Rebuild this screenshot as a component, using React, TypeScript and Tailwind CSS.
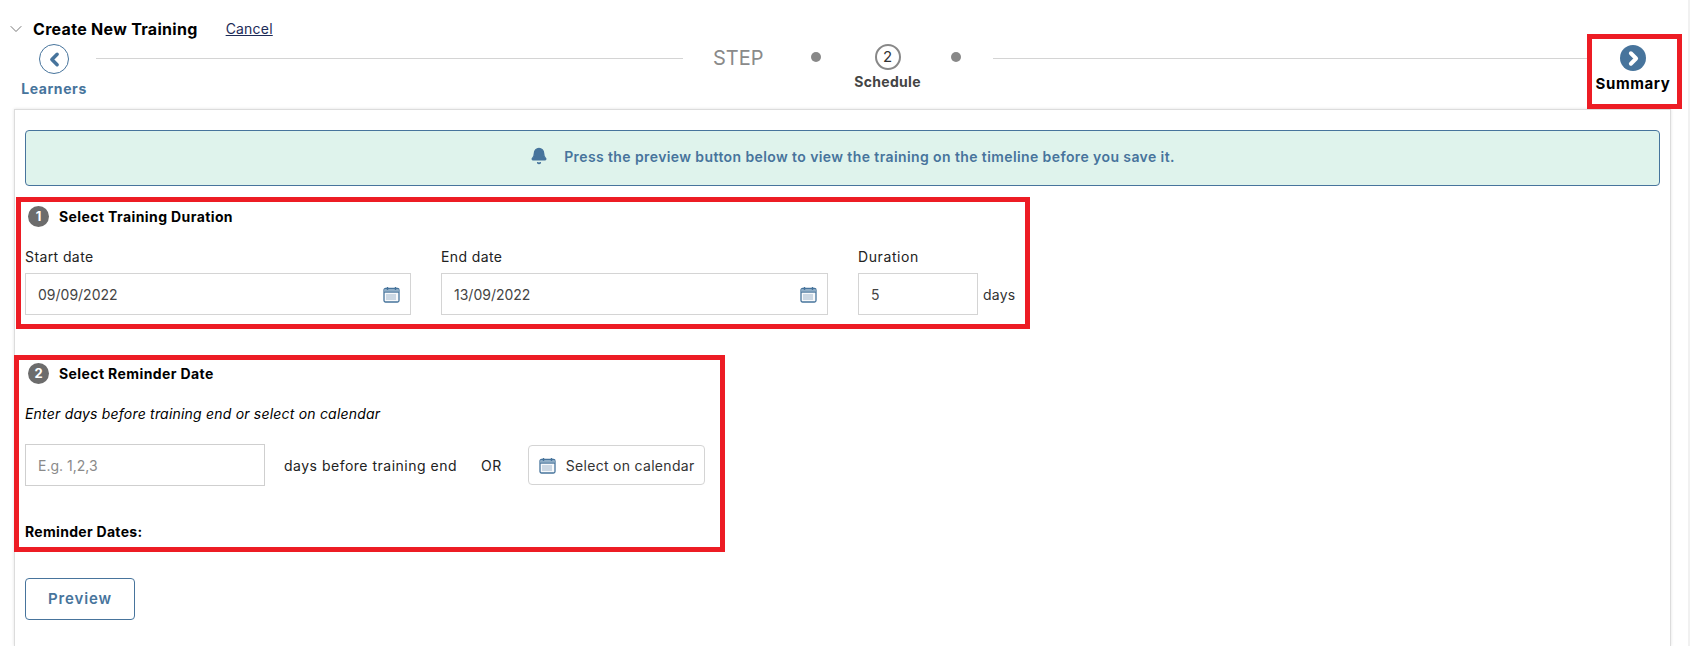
import React from "react";
import { Bell, ChevronDown, ChevronLeft, ChevronRight } from "lucide-react";

const CalendarIcon: React.FC = () => (
  <svg width="17" height="17" viewBox="0 0 17 17" fill="none" className="shrink-0">
    <rect x="1" y="2.5" width="15" height="13.5" rx="1.5" stroke="#47749c" strokeWidth="1.3" fill="#f7f9fb" />
    <rect x="1.5" y="3" width="14" height="3" fill="#8fadc6" />
    <path d="M1 6.2h15" stroke="#47749c" strokeWidth="1" />
    <path d="M4.5 1v3M12.5 1v3" stroke="#47749c" strokeWidth="1.4" />
    <path d="M3.5 9h10M3.5 11h10M3.5 13h10" stroke="#47749c" strokeWidth="1" strokeDasharray="1 1" />
  </svg>
);

const NumberBadge: React.FC<{ n: number }> = ({ n }) => (
  <span className="w-[21px] h-[21px] rounded-full bg-[#6c6c6c] text-white text-[13px] font-bold flex items-center justify-center">
    {n}
  </span>
);

const DateField: React.FC<{ label: string; value: string }> = ({ label, value }) => (
  <div>
    <div className="text-[14px] leading-[20px] tracking-[0.4px] text-[#222] mb-[6px]">{label}</div>
    <div className="w-full h-[42px] border border-[#d4d4d4] pl-3 pr-[10px] flex items-center justify-between text-[14px] text-[#444]">
      <span>{value}</span>
      <CalendarIcon />
    </div>
  </div>
);

export default function App() {
  return (
    <div className="h-[646px] overflow-hidden bg-white font-['Inter','Liberation_Sans',sans-serif] pt-[17px] border-r-[2px] border-[#f1f1f1]">
      {/* title row */}
      <div className="flex items-center h-[24px] pl-[6px]">
        <ChevronDown size={20} color="#777" strokeWidth={1.2} />
        <span className="ml-[7px] text-[16px] tracking-[0.3px] font-bold text-black">Create New Training</span>
        <a href="#" className="ml-[28px] -mt-[2px] text-[14px] tracking-[0.2px] underline text-[#1d2b57]">
          Cancel
        </a>
      </div>

      {/* stepper */}
      <div className="flex h-[68px] pl-[21px] pr-[6px]">
        <div className="w-[66px] flex flex-col items-center pt-[3px]">
          <span className="w-[30px] h-[30px] rounded-full border border-[#47749c] flex items-center justify-center">
            <ChevronLeft size={21} color="#47749c" strokeWidth={4} />
          </span>
          <span className="mt-[4px] text-[14px] tracking-[0.6px] font-bold text-[#47749c]">Learners</span>
        </div>
        <div className="w-[587px] ml-[9px] mt-[17px] h-px bg-[#d4d4d4]" />
        <div className="ml-[30px] mt-[4px] h-[26px] flex items-center text-[20px] text-[#8a8a8a]">STEP</div>
        <div className="ml-[47px] mt-[11px] w-[10px] h-[10px] rounded-full bg-[#888]" />
        <div className="w-[130px] pl-[4px] flex flex-col items-center pt-[3px]">
          <span className="w-[26px] h-[26px] rounded-full border-2 border-[#888] flex items-center justify-center text-[15px] text-[#333]">
            2
          </span>
          <span className="mt-[1px] text-[14px] tracking-[0.3px] font-bold text-[#444]">Schedule</span>
        </div>
        <div className="mt-[11px] w-[10px] h-[10px] rounded-full bg-[#888]" />
        <div className="flex-1 ml-[32px] mt-[17px] h-px bg-[#d4d4d4]" />
        <div className="w-[95px] h-[75px] -mt-[7px] border-[5px] border-[#ed1c24] flex flex-col items-center pt-[6px] pr-[3px] bg-white">
          <span className="w-[26px] h-[26px] rounded-full bg-[#47749c] flex items-center justify-center">
            <ChevronRight size={21} color="#fff" strokeWidth={4.5} />
          </span>
          <span className="mt-[2px] text-[15px] tracking-[0.6px] font-bold text-black">Summary</span>
        </div>
      </div>

      {/* panel */}
      <div className="ml-[14px] w-[1657px] h-[537px] border-l border-t border-r border-[#dcdcdc] shadow-[0_0_3px_rgba(0,0,0,0.12)]">
        <div className="mt-[20px] mx-[10px] h-[56px] rounded-[4px] border border-[#47749c] bg-[#dff3ec] flex items-center justify-center pl-[20px] pb-[4px] text-[14px] tracking-[0.4px] font-semibold text-[#47749c]">
          <Bell size={18} fill="#47749c" className="mr-[16px]" />
          Press the preview button below to view the training on the timeline before you save it.
        </div>

        <section className="mt-[11px] ml-[1px] w-[1014px] h-[132px] border-[5px] border-[#ed1c24] pl-[4px] pt-[4px]">
          <div className="flex items-center gap-[10px] pl-[3px]">
            <NumberBadge n={1} />
            <h2 className="text-[14px] tracking-[0.4px] font-bold text-black">Select Training Duration</h2>
          </div>
          <div className="flex mt-[20px]">
            <div className="w-[386px]">
              <DateField label="Start date" value="09/09/2022" />
            </div>
            <div className="w-[387px] ml-[30px]">
              <DateField label="End date" value="13/09/2022" />
            </div>
            <div className="ml-[30px]">
              <div className="text-[14px] leading-[20px] tracking-[0.6px] text-[#222] mb-[6px]">Duration</div>
              <div className="flex items-end">
                <div className="w-[120px] h-[42px] border border-[#d4d4d4] pl-3 flex items-center text-[14px] text-[#444]">
                  5
                </div>
                <span className="ml-[5px] mb-[10px] text-[14px] tracking-[0.2px] text-[#333]">days</span>
              </div>
            </div>
          </div>
        </section>

        <section className="mt-[26px] -ml-px w-[711px] h-[197px] border-[5px] border-[#ed1c24] pl-[6px] pt-[3px]">
          <div className="flex items-center gap-[10px] pl-[3px]">
            <NumberBadge n={2} />
            <h2 className="text-[14px] tracking-[0.4px] font-bold text-black">Select Reminder Date</h2>
          </div>
          <p className="mt-[19px] text-[14px] tracking-[0.2px] italic text-black">
            Enter days before training end or select on calendar
          </p>
          <div className="flex items-center mt-[20px] text-[14px] text-[#222]">
            <div className="w-[240px] h-[42px] border border-[#cfcfcf] pl-3 flex items-center text-[#8a8a8a]">
              E.g. 1,2,3
            </div>
            <span className="ml-[19px] tracking-[0.5px]">days before training end</span>
            <span className="ml-[24px] tracking-[0.5px]">OR</span>
            <button className="ml-[26px] w-[177px] h-[40px] rounded-[4px] border border-[#d4d4d4] flex items-center pl-[10px] gap-[10px] tracking-[0.3px] text-[#333]">
              <CalendarIcon />
              Select on calendar
            </button>
          </div>
          <div className="mt-[35px] text-[14px] tracking-[0.3px] font-bold text-black">Reminder Dates:</div>
        </section>

        <button className="mt-[26px] ml-[10px] w-[110px] h-[42px] rounded-[4px] border border-[#47749c] text-[15px] font-semibold tracking-[0.9px] text-[#47749c]">
          Preview
        </button>
      </div>
    </div>
  );
}
